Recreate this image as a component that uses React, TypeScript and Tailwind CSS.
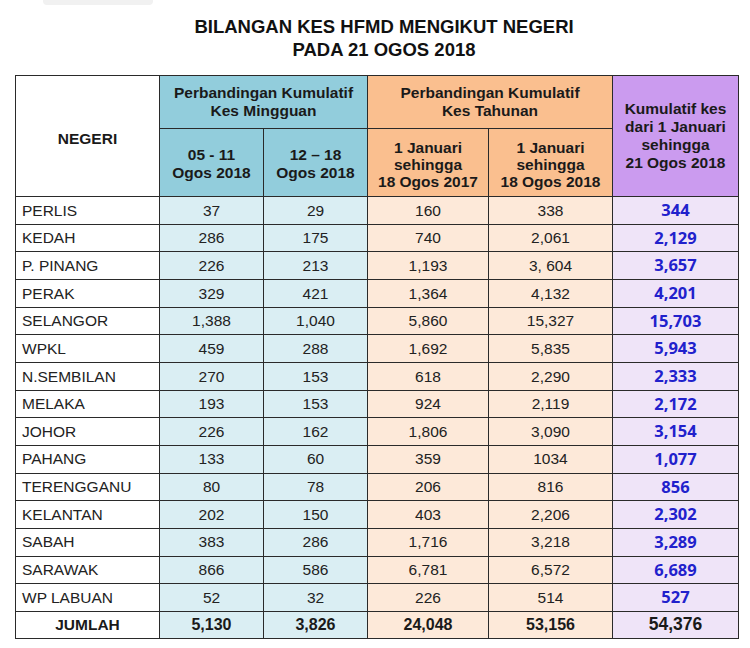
import React from "react";

type Row = [string, string, string, string, string, string];

const rows: Row[] = [
  ["PERLIS", "37", "29", "160", "338", "344"],
  ["KEDAH", "286", "175", "740", "2,061", "2,129"],
  ["P. PINANG", "226", "213", "1,193", "3, 604", "3,657"],
  ["PERAK", "329", "421", "1,364", "4,132", "4,201"],
  ["SELANGOR", "1,388", "1,040", "5,860", "15,327", "15,703"],
  ["WPKL", "459", "288", "1,692", "5,835", "5,943"],
  ["N.SEMBILAN", "270", "153", "618", "2,290", "2,333"],
  ["MELAKA", "193", "153", "924", "2,119", "2,172"],
  ["JOHOR", "226", "162", "1,806", "3,090", "3,154"],
  ["PAHANG", "133", "60", "359", "1034", "1,077"],
  ["TERENGGANU", "80", "78", "206", "816", "856"],
  ["KELANTAN", "202", "150", "403", "2,206", "2,302"],
  ["SABAH", "383", "286", "1,716", "3,218", "3,289"],
  ["SARAWAK", "866", "586", "6,781", "6,572", "6,689"],
  ["WP LABUAN", "52", "32", "226", "514", "527"],
];

const bd = "border-[1.5px] border-solid border-[#2a2a2a]";

export default function App() {
  return (
    <div className="w-[750px] h-[648px] bg-white font-['Liberation_Sans',Arial,sans-serif] text-[#1a1a1a] overflow-hidden">
      <div className="ml-[43px] w-[110px] h-[5px] rounded-b-[4px] bg-[#f1f1f1]" />
      <div className="mt-[10px] pl-[18px] text-center font-bold text-[18.5px] leading-[23px] text-[#111]">
        <div>BILANGAN KES HFMD MENGIKUT NEGERI</div>
        <div>PADA 21 OGOS 2018</div>
      </div>
      <div className="mt-[14px] ml-[15px]">
        <table className="table-fixed border-collapse w-[723px]">
          <colgroup>
            <col className="w-[144px]" />
            <col className="w-[104px]" />
            <col className="w-[104px]" />
            <col className="w-[121px]" />
            <col className="w-[124px]" />
            <col className="w-[126px]" />
          </colgroup>
          <thead>
            <tr className="h-[53px]">
              <th rowSpan={2} className={`${bd} bg-white text-[15.5px] font-bold text-center align-middle pt-[6px]`}>
                NEGERI
              </th>
              <th colSpan={2} className={`${bd} bg-[#92cddc] text-[15.5px] font-bold leading-[18.5px] text-center align-middle`}>
                <div>Perbandingan Kumulatif</div>
                <div>Kes Mingguan</div>
              </th>
              <th colSpan={2} className={`${bd} bg-[#fabf8f] text-[15.5px] font-bold leading-[18.5px] text-center align-middle`}>
                <div>Perbandingan Kumulatif</div>
                <div>Kes Tahunan</div>
              </th>
              <th rowSpan={2} className={`${bd} bg-[#cb9bef] text-[15.5px] font-bold leading-[18px] text-center align-middle`}>
                <div>Kumulatif kes</div>
                <div>dari 1 Januari</div>
                <div>sehingga</div>
                <div>21 Ogos 2018</div>
              </th>
            </tr>
            <tr className="h-[68px]">
              <th className={`${bd} bg-[#92cddc] text-[15.5px] font-bold leading-[18px] text-center align-middle pt-[2px]`}>
                <div>05 - 11</div>
                <div>Ogos 2018</div>
              </th>
              <th className={`${bd} bg-[#92cddc] text-[15.5px] font-bold leading-[18px] text-center align-middle pt-[2px]`}>
                <div>12 – 18</div>
                <div>Ogos 2018</div>
              </th>
              <th className={`${bd} bg-[#fabf8f] text-[15.5px] font-bold leading-[17px] text-center align-bottom pb-[6px]`}>
                <div>1 Januari</div>
                <div>sehingga</div>
                <div>18 Ogos 2017</div>
              </th>
              <th className={`${bd} bg-[#fabf8f] text-[15.5px] font-bold leading-[17px] text-center align-bottom pb-[6px]`}>
                <div>1 Januari</div>
                <div>sehingga</div>
                <div>18 Ogos 2018</div>
              </th>
            </tr>
          </thead>
          <tbody>
            {rows.map((r) => (
              <tr key={r[0]} className="h-[27.67px]">
                <td className={`${bd} bg-white text-[15.5px] leading-none pl-[6px] text-left text-[#222]`}>{r[0]}</td>
                <td className={`${bd} bg-[#daeef3] text-[15.5px] leading-none text-center text-[#222]`}>{r[1]}</td>
                <td className={`${bd} bg-[#daeef3] text-[15.5px] leading-none text-center text-[#222]`}>{r[2]}</td>
                <td className={`${bd} bg-[#fde9d9] text-[15.5px] leading-none text-center text-[#222]`}>{r[3]}</td>
                <td className={`${bd} bg-[#fde9d9] text-[15.5px] leading-none text-center text-[#222]`}>{r[4]}</td>
                <td className={`${bd} bg-[#efe4f8] text-[16.5px] leading-none text-center font-bold font-['Open_Sans',sans-serif] text-[#2121cc]`}>{r[5]}</td>
              </tr>
            ))}
            <tr className="h-[27px]">
              <td className={`${bd} bg-white text-[15.5px] leading-none font-bold text-center`}>JUMLAH</td>
              <td className={`${bd} bg-[#daeef3] text-[16px] leading-none font-bold text-center`}>5,130</td>
              <td className={`${bd} bg-[#daeef3] text-[16px] leading-none font-bold text-center`}>3,826</td>
              <td className={`${bd} bg-[#fde9d9] text-[16px] leading-none font-bold text-center`}>24,048</td>
              <td className={`${bd} bg-[#fde9d9] text-[16px] leading-none font-bold text-center`}>53,156</td>
              <td className={`${bd} bg-[#efe4f8] text-[17.5px] leading-none font-bold text-center`}>54,376</td>
            </tr>
          </tbody>
        </table>
      </div>
    </div>
  );
}
